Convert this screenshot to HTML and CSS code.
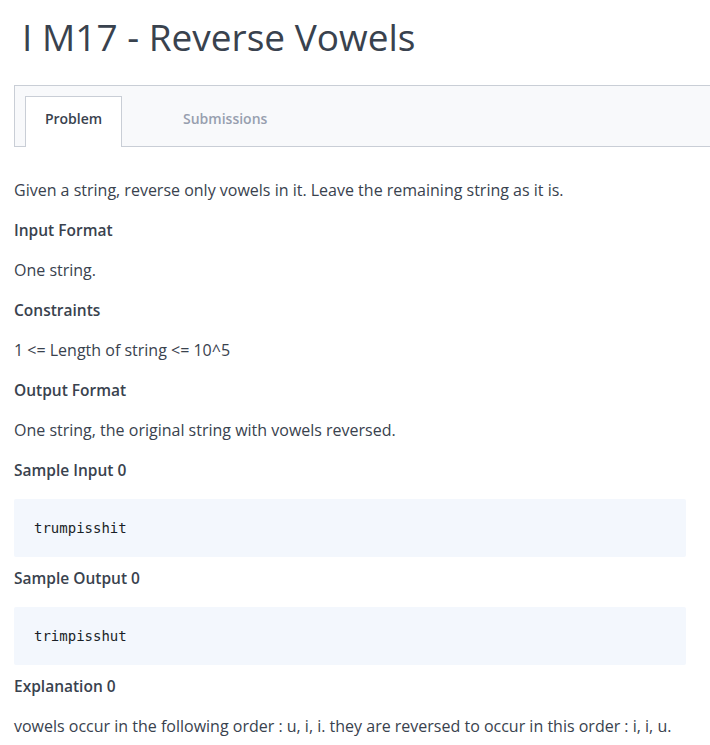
FILE: index.html
```html
<!DOCTYPE html>
<html>
<head>
<meta charset="utf-8">
<link rel="stylesheet" href="styles.css">
</head>
<body>
<div class="page">
  <h1 class="title">I M17 - Reverse Vowels</h1>
  <div class="tabs">
    <div class="tab active">Problem</div>
    <div class="tab">Submissions</div>
  </div>
  <div class="content">
    <p class="text">Given a string, reverse only vowels in it. Leave the remaining string as it is.</p>
    <h3 class="head">Input Format</h3>
    <p class="text">One string.</p>
    <h3 class="head">Constraints</h3>
    <p class="text">1 &lt;= Length of string &lt;= 10^5</p>
    <h3 class="head">Output Format</h3>
    <p class="text">One string, the original string with vowels reversed.</p>
    <h3 class="head">Sample Input 0</h3>
    <pre class="code">trumpisshit</pre>
    <h3 class="head">Sample Output 0</h3>
    <pre class="code">trimpisshut</pre>
    <h3 class="head">Explanation 0</h3>
    <p class="text">vowels occur in the following order : u, i, i. they are reversed to occur in this order : i, i, u.</p>
  </div>
</div>
</body>
</html>
```
FILE: styles.css
```css
html, body {
  margin: 0;
  padding: 0;
  background: #ffffff;
}
body {
  font-family: "Open Sans", sans-serif;
  color: #39424e;
  overflow: hidden;
}
.page {
  padding: 0 0 0 14px;
}
.title {
  margin: 0;
  padding: 15px 0 0 8px;
  height: 72px;
  box-sizing: border-box;
  font-size: 37px;
  font-weight: 400;
  line-height: 44px;
  color: #39424e;
}
.tabs {
  margin-top: 13px;
  display: flex;
  align-items: flex-end;
  height: 62px;
  box-sizing: border-box;
  background: #f8f9fb;
  border: 1px solid #c9ced6;
  border-right: none;
  margin-right: -20px;
  padding-left: 10px;
}
.tab {
  font-size: 14px;
  font-weight: 600;
  height: 50px;
  box-sizing: border-box;
  display: flex;
  align-items: center;
  justify-content: center;
  color: #979faf;
  margin-bottom: -1px;
  width: 97px;
  padding-bottom: 8px;
}
.tab.active {
  background: #ffffff;
  color: #39424e;
  border: 1px solid #c9ced6;
  border-bottom: none;
  height: 51px;
  padding-bottom: 8px;
  margin-right: 61px;
}
.tab + .tab {
  width: auto;
}
.content {
  padding-top: 33px;
  padding-right: 24px;
}
.text {
  margin: 0 0 20px;
  font-size: 16px;
  line-height: 20px;
  height: 20px;
}
.head {
  margin: 0 0 20px;
  font-size: 15.5px;
  font-weight: 600;
  line-height: 20px;
  height: 20px;
}
.code {
  margin: -1px 0 11px;
  background: #f3f7fd;
  border-radius: 2px;
  height: 58px;
  box-sizing: border-box;
  padding: 0 20px;
  display: flex;
  align-items: center;
  font-family: "DejaVu Sans Mono", monospace;
  font-size: 14px;
  color: #1a1f27;
}
```
